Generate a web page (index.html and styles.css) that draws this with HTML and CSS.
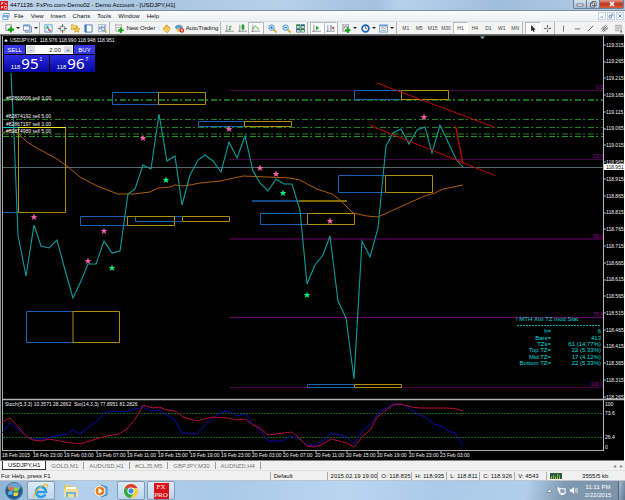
FILE: index.html
```html
<!DOCTYPE html>
<html lang="en">
<head>
<meta charset="utf-8">
<meta name="viewport" content="width=device-width, initial-scale=1">
<title>4471136: FxPro.com-Demo02 - Demo Account - [USDJPY,H1]</title>
<link rel="stylesheet" href="styles.css">
</head>
<body>
<header class="titlebar">
  <svg class="logo" viewBox="0 0 8 9"><rect width="8" height="9" fill="#d8141c"/><path d="M1.500 4V1.500H3.500M1.500 2.500H3M4.500 1.500L7 4M7 1.500L4.500 4M1.500 8V5.500H3V6.500H1.500M4.500 5.500H7V8H4.500Z" stroke="#fff" stroke-width=".6" fill="none"/></svg>
  <h1>4471136: FxPro.com-Demo02 - Demo Account - [USDJPY,H1]</h1>
  <div class="winbtns">
    <button class="min" aria-label="Minimize"><svg viewBox="0 0 10 8"><rect x="2" y="4" width="6" height="2" fill="#fff" stroke="#445" stroke-width=".6"/></svg></button>
    <button class="max" aria-label="Restore"><svg viewBox="0 0 10 8"><path d="M4 1.500h4v4h-4zM2.500 3h4v4h-4z" fill="#fff" stroke="#445" stroke-width=".8"/></svg></button>
    <button class="close" aria-label="Close"><svg viewBox="0 0 10 8"><path d="M3 2l4 4M7 2L3 6" stroke="#fff" stroke-width="1.600"/></svg></button>
  </div>
</header>

<nav class="menubar">
  <svg class="doc" viewBox="0 0 8 8"><path d="M1.500 .500h6v4h-6zM.500 3h5.500v4.500H.500z" fill="#fff" stroke="#5a9bd8"/><path d="M.500 3.500h5.500" stroke="#5a9bd8"/></svg>
  <button>File</button><button>View</button><button>Insert</button><button>Charts</button><button>Tools</button><button>Window</button><button>Help</button>
  <div class="mdi">
    <button aria-label="Minimize chart"><svg viewBox="0 0 8 8"><path d="M2 5.500h3" stroke="#456f9c"/></svg></button>
    <button aria-label="Restore chart"><svg viewBox="0 0 8 8"><path d="M3.500 1.500h3v3M1.500 3.500h3v3h-3z" fill="none" stroke="#456f9c" stroke-width=".9"/></svg></button>
    <button aria-label="Close chart"><svg viewBox="0 0 8 8"><path d="M2 2l4 4M6 2L2 6" stroke="#456f9c" stroke-width="1.100"/></svg></button>
  </div>
</nav>

<div class="toolbar">
  <div class="group">
    <button aria-label="New chart"><svg class="ico" viewBox="0 0 10 10"><path d="M1 1h6v6H1z" fill="#fff" stroke="#789"/><path d="M6.500 3v6.500M3 6.300h7" stroke="#12a512" stroke-width="2.400"/></svg><i class="caret"></i></button>
    <button aria-label="Profiles"><svg class="ico" viewBox="0 0 10 10"><path d="M2.500 3h7v6h-7z" fill="#cfe0f2" stroke="#6a8fb5"/><path d="M.500 1h7v6h-7z" fill="#fff" stroke="#6a8fb5"/><path d="M1 2h6" stroke="#5a9bd8" stroke-width="1.500"/></svg><i class="caret"></i></button>
  </div>
  <div class="group">
    <button aria-label="Market Watch"><svg class="ico" viewBox="0 0 10 10"><path d="M1 1h8v8H1z" fill="#e8f4ff" stroke="#4c9bd6"/><path d="M2 5l2-3 2 3z" fill="#1da51d"/><path d="M4.500 5.500l3 2.500" stroke="#d33" stroke-width="1.500"/></svg></button>
    <button aria-label="Data Window"><svg class="ico" viewBox="0 0 10 10"><circle cx="5" cy="5" r="3" fill="none" stroke="#777"/><path d="M5 0v3.500M5 6.500V10M0 5h3.500M6.500 5H10" stroke="#666"/></svg></button>
    <button aria-label="Navigator"><svg class="ico" viewBox="0 0 10 10"><path d="M0 1h3l1 1h3v4H0z" fill="#f3d36a" stroke="#c39a24" stroke-width=".7"/><path d="M6.500 3l1 2 2.500.200-1.800 1.600.600 2.400-2.300-1.200-2.300 1.200.600-2.400L3 5.200 5.500 5z" fill="#ffc52e" stroke="#b98712" stroke-width=".6"/></svg></button>
    <button aria-label="Terminal"><svg class="ico" viewBox="0 0 10 10"><path d="M1 1h8v8H1z" fill="#fff" stroke="#3d79b8"/><path d="M2 1v8" stroke="#3d79b8" stroke-width="2"/></svg></button>
    <button aria-label="Strategy Tester"><svg class="ico" viewBox="0 0 10 10"><path d="M.500 .500h8v8h-8z" fill="#eef4fb" stroke="#8aa9c8" stroke-width=".8"/><path d="M2 6V3M4 5V2M7 4V2" stroke="#567"/><circle cx="5.500" cy="5.500" r="2" fill="#cfe6ff" stroke="#5587bb" stroke-width=".8"/><path d="M7 7l2.500 2.500" stroke="#c49a2e" stroke-width="1.400"/></svg></button>
  </div>
  <div class="group orders">
    <button><svg class="ico" viewBox="0 0 10 10"><path d="M1 0h6v8H1z" fill="#fff" stroke="#888" stroke-width=".8"/><path d="M2 2h4M2 4h4" stroke="#999" stroke-width=".7"/><path d="M6.500 4v6M3.500 7h6" stroke="#12a512" stroke-width="2.200"/></svg>New Order</button>
    <button aria-label="MetaEditor"><svg class="ico" viewBox="0 0 10 10"><path d="M1 6l4-5 4.500 4L6 9.500z" fill="#f4c648" stroke="#a87a14" stroke-width=".8"/><path d="M1 6l5 2 3.500-3" fill="none" stroke="#fff2b8" stroke-width=".8"/></svg></button>
    <button><svg class="ico" viewBox="0 0 10 10"><path d="M0 3.500Q4-1 8.500 3L6 7H3z" fill="#5d9fd0" stroke="#3f79a8" stroke-width=".6"/><path d="M2 5h4v4H3z" fill="#f0c14a"/><circle cx="7.500" cy="7" r="2.600" fill="#e02a1c"/><path d="M6.600 6h1.800v2H6.600z" fill="#fff"/></svg>AutoTrading</button>
  </div>
  <div class="group">
    <button aria-label="Bar chart"><svg class="ico" viewBox="0 0 10 10"><path d="M2 1v8M0 8h10" stroke="#777" stroke-width=".8"/><path d="M5.500 2v5M5.500 3H7M4 6h1.500" stroke="#17962a"/></svg></button>
    <button aria-label="Candlesticks"><svg class="ico" viewBox="0 0 10 10"><path d="M2 1v8M0 8h10" stroke="#777" stroke-width=".8"/><path d="M5.500 0v7" stroke="#17962a"/><path d="M4.500 1.500h2v4h-2z" fill="#26b83c" stroke="#17962a"/></svg></button>
    <button class="on" aria-label="Line chart"><svg class="ico" viewBox="0 0 10 10"><path d="M2 1v8M0 8h10" stroke="#777" stroke-width=".8"/><path d="M2 6Q4.500 0 6.500 4L9 6" fill="none" stroke="#3da54d"/></svg></button>
  </div>
  <div class="group">
    <button aria-label="Zoom in"><svg class="ico" viewBox="0 0 10 10"><path d="M6 6l3.500 3.500" stroke="#d6a92e" stroke-width="1.800"/><circle cx="4" cy="4" r="3" fill="#d5ecff" stroke="#3e8fcb"/><path d="M2.500 4h3M4 2.500v3" stroke="#1d6cb2"/></svg></button>
    <button aria-label="Zoom out"><svg class="ico" viewBox="0 0 10 10"><path d="M6 6l3.500 3.500" stroke="#d6a92e" stroke-width="1.800"/><circle cx="4" cy="4" r="3" fill="#d5ecff" stroke="#3e8fcb"/><path d="M2.500 4h3" stroke="#1d6cb2"/></svg></button>
    <button aria-label="Tile windows"><svg class="ico" viewBox="0 0 10 10"><path d="M1 1h8v8H1z" fill="#fff"/><path d="M.500 1.500h4M5.500 6h4" stroke="#1ea01e" stroke-width="2"/><path d="M5.500 1.500h4M.500 6h4" stroke="#2a58c8" stroke-width="2"/><path d="M.500 1h4v3.500h-4zM5.500 1h4v3.500h-4zM.500 5.500h4v3.500h-4zM5.500 5.500h4v3.500h-4z" fill="none" stroke="#2d6b50" stroke-width=".8"/></svg></button>
  </div>
  <div class="group">
    <button class="on" aria-label="Auto scroll"><svg class="ico" viewBox="0 0 10 10"><path d="M2 1v8M0 8h10" stroke="#777" stroke-width=".8"/><path d="M4.500 2l3.500 2.500-3.500 2.500z" fill="#22a534"/></svg></button>
    <button class="on" aria-label="Chart shift"><svg class="ico" viewBox="0 0 10 10"><path d="M2 1v8M0 8h10" stroke="#777" stroke-width=".8"/><path d="M5.500 1v6" stroke="#2c6eb4"/><path d="M9 2.500L6 4.500l3 2z" fill="#c44c3a"/></svg></button>
  </div>
  <div class="group">
    <button aria-label="Indicators"><svg class="ico" viewBox="0 0 10 10"><path d="M1 0h6v8H1z" fill="#e9e9e9" stroke="#777" stroke-width=".8"/><path d="M2 5q2-5 4-1" fill="none" stroke="#444" stroke-width=".8"/><path d="M6.500 4v6M3.500 7h6" stroke="#12a512" stroke-width="2.200"/></svg><i class="caret"></i></button>
    <button aria-label="Periods"><svg class="ico" viewBox="0 0 10 10"><circle cx="5" cy="5" r="3.800" fill="#f4faff" stroke="#1b66bd" stroke-width="1.800"/><path d="M5 2.500V5h2" fill="none" stroke="#456" stroke-width=".8"/></svg><i class="caret"></i></button>
    <button aria-label="Templates"><svg class="ico" viewBox="0 0 10 10"><path d="M.500 1h9v8h-9z" fill="#f2f8ff" stroke="#6f9cc8"/><path d="M1 2h8" stroke="#5a9bd8" stroke-width="1.500"/><path d="M2 5l2-1 2 1 2-1" fill="none" stroke="#c44" stroke-width=".7"/><path d="M2 7.500l2-1 2 1 2-1" fill="none" stroke="#2a2" stroke-width=".7"/></svg><i class="caret"></i></button>
  </div>
  <div class="group frames">
    <button>M1</button><button>M5</button><button>M15</button><button>M30</button><button class="on">H1</button><button>H4</button><button>D1</button><button>W1</button><button>MN</button>
  </div>
  <div class="group">
    <button class="on" aria-label="Cursor"><svg class="ico" viewBox="0 0 10 10"><path d="M3.500 1v7l1.600-1.300 1 2.300 1.200-.600-1-2.100H8.500z" fill="#222"/></svg></button>
    <button aria-label="Crosshair"><svg class="ico" viewBox="0 0 10 10"><path d="M5 1v3M5 6v3M1 5h3M6 5h3" stroke="#555"/></svg></button>
  </div>
  <div class="group">
    <button aria-label="Vertical line"><svg class="ico" viewBox="0 0 10 10"><path d="M5 2v6.500" stroke="#666"/></svg></button>
    <button aria-label="Horizontal line"><svg class="ico" viewBox="0 0 10 10"><path d="M2 5.500h6" stroke="#666"/></svg></button>
    <button aria-label="Trendline"><svg class="ico" viewBox="0 0 10 10"><path d="M2 8l6-6" stroke="#555"/></svg></button>
    <button aria-label="Equidistant channel"><svg class="ico" viewBox="0 0 10 10"><path d="M1 6l6-5M3 9l6-5M2 8l6-6M3 4l3 4M5 3l3 3" stroke="#555" stroke-width=".8"/></svg></button>
    <button aria-label="Fibonacci retracement"><svg class="ico" viewBox="0 0 10 10"><path d="M1 1.500h8M1 3.500h8M1 5.500h8M1 7.500h5" stroke="#888" stroke-width=".8"/><path d="M8 7v3M7 8h2" stroke="#444" stroke-width=".8"/></svg></button>
  </div>
</div>

<main class="chart">
<svg class="plot" viewBox="0 34 625 427" role="img" aria-label="USDJPY hourly line chart with stochastic oscillator">
  <defs>
    <path id="star" d="M0-3.500L.900-1H3.300L1.400 .400 2.200 2.900 0 1.500-2.200 2.900-1.400 .400-3.300-1H-.900z"/>
  </defs>
  <rect y="34" width="624" height="427" fill="#000"/>
  <g class="frame">
    <path d="M0 34.500H624" stroke="#777"/><path d="M2 35.500H624" stroke="#4b4f4b"/>
    <path d="M.500 35V461" stroke="#8c9090"/><path d="M2.500 36V451" stroke="#a4a8a8"/>
    <path d="M2 399.500H624" stroke="#b2b2b2" stroke-width="1.400"/>
    <path d="M2 450.500H604" stroke="#a8a8a8"/><path d="M0 460.500H624" stroke="#858585"/>
    <path d="M603.500 36V451" stroke="#b8b8b8"/>
  </g>
  <path d="M480 36.500h5l-2.500 2.500z" fill="#8fa9c0"/>

  <g class="fib">
    <path d="M229 90.500H603M229 159.500H603"/><path d="M229 239H603" stroke-width="1.500"/><path d="M229 317.500H603" stroke="#690069"/><path d="M229 387.500H603"/>
    <text x="603" y="89">0.0</text><text x="603" y="158">23.6</text><text x="603" y="238">50.0</text><text x="603" y="316">76.4</text><text x="603" y="386">100.0</text>
  </g>
  <g class="orders-lines">
    <path d="M3 100H603" stroke="#229822" stroke-width="1.700"/><path d="M3 119.500H603"/><path d="M3 127.500H603"/><path d="M3 134H603" stroke="#0f5a0f" stroke-width="1.600"/><path d="M3 136.500H603" stroke="#229822"/>
  </g>
  <path d="M3 167.500H603" stroke="#506b70"/>

  <g class="zone blue">
    <path d="M159 92.500H112.500V104.500H159"/><path d="M245 121.500H198.500V126.500H245"/><path d="M401 90.500H354.500V99.500H401"/>
    <path d="M3 127.500H18" stroke="#0cc"/><path d="M3 212.500H18"/><path d="M127 216.500H80.500V225.500H127"/><path d="M182 216.500H135.500V221.500H182"/>
    <path d="M385 175.500H338.500V192.500H385"/><path d="M252 201H299" stroke-width="1.600"/><path d="M307 213.500H260.500V224.500H307"/>
    <path d="M73 311.500H26.500V342.500H73"/><path d="M354 384.500H307.500V387.500H354"/>
  </g>
  <g class="zone gold">
    <path d="M158.500 92.500H205.500V104.500H158.500z"/><path d="M244.500 121.500H291.500V126.500H244.500z"/><path d="M401.500 90.500H448.500V99.500H401.500z"/>
    <path d="M18.500 127.500H65.500V212.500H18.500z"/><path d="M18 127.500H66" stroke="#f0e818"/><path d="M127.500 216.500H174.500V225.500H127.500z"/><path d="M182.500 216.500H229.500V221.500H182.500z"/>
    <path d="M385.500 175.500H432.500V192.500H385.500z"/><path d="M299 201H347" stroke-width="1.600"/><path d="M307.500 213.500H354.500V224.500H307.500z"/>
    <path d="M73 311.500H119.500V342.500H73z"/><path d="M354.500 384.500H401.500V387.500H354.500z"/>
  </g>

  <polyline class="ma" points="2,133 10,130 18,133 27,142 37,148 57,159 67,166 80,177 97,186 118,194 133,194 150,192 158,188 170,187 175,185 183,186 190,185 200,183 220,181 243,176 267,177 290,178 300,180 307,184 317,189 332,194 340,200 353,213 367,216 378,217 400,207 420,198 425,196 435,193 443,189 453,187 463,185"/>
  <polyline class="price" points="11,73 14,135 18,235 26,276 34,225 41,246 49,248 57,240 65,270 73,298 81,281 88,264 96,264 104,241 112,253 120,251 128,194 135,189 143,165 151,169 159,114 167,161 175,156 182,205 190,175 198,160 205,155 213,161 221,172 229,142 237,158 245,136 253,171 260,183 268,191 276,179 284,184 292,184 300,210 307,284 315,265 323,255 330,236 338,301 346,318 354,379 362,241 370,257 378,228 386,146 393,133 401,129 409,144 417,130 425,127 432,153 440,125 448,142 456,159 463,167"/>
  <g class="trend"><path d="M377 83L495 127.500M370 125.500L495 175.500"/><path d="M455.500 126L463 164" stroke-width="1.300"/></g>

  <g fill="#ff5fae">
    <use href="#star" x="143" y="138"/><use href="#star" x="229" y="129"/><use href="#star" x="424" y="117"/><use href="#star" x="34" y="217"/><use href="#star" x="104" y="231"/><use href="#star" x="88" y="261"/><use href="#star" x="260" y="168"/><use href="#star" x="276" y="174"/><use href="#star" x="330" y="221"/>
  </g>
  <g fill="#00f080">
    <use href="#star" x="166" y="180"/><use href="#star" x="283" y="193"/><use href="#star" x="112" y="268"/><use href="#star" x="307" y="295"/>
  </g>

  <path d="M4 41.500h4l-2-2.500z" fill="#fff"/>
  <g class="label">
    <text x="10" y="42">USDJPY,H1&#160; 118.976 118.990 118.948 118.951</text>
    <text x="6" y="100">#82868006 sell 3.00</text><text x="6" y="118">#82874192 sell 5.00</text><text x="6" y="126">#82867197 sell 3.00</text><text x="6" y="133">#82874989 sell 5.00</text>
    <text x="5" y="406">Stoch(5,3,3) 10.3571 28.2662&#160; Sto(14,3,3) 77.8951 81.2826</text>
  </g>

  <g class="stat">
    <text x="516" y="321">! MTH Xixi TZ mod Stat</text>
    <path d="M517 325.500H601" stroke="#00a8a8" stroke-dasharray="2 1"/>
    <g class="right">
      <text x="551" y="333">h=</text><text x="601" y="333">6</text>
      <text x="551" y="340">Bars=</text><text x="601" y="340">413</text>
      <text x="551" y="346">TZs=</text><text x="601" y="346">61 (14.77%)</text>
      <text x="551" y="352">Top TZ=</text><text x="601" y="352">22 (5.33%)</text>
      <text x="551" y="359">Mid TZ=</text><text x="601" y="359">17 (4.12%)</text>
      <text x="551" y="365">Bottom TZ=</text><text x="601" y="365">22 (5.33%)</text>
    </g>
  </g>

  <path class="levels" d="M3 413.500H603M3 437.500H603"/>
  <polyline class="slow" points="2,433 10,423 18,429 27,437 33,439 43,439 50,437 67,434 73,430 80,434 90,426 97,421 104,413 112,411 124,412 136,409 143,407 151,411 159,410 167,415 175,420 182,433 197,434 207,423 217,415 222,412 229,411 237,416 246,414 252,424 260,430 268,441 282,441 291,436 299,439 307,445 315,445 323,441 331,433 347,437 354,444 362,431 371,424 378,413 393,404 402,404 418,414 425,417 434,424 443,427 448,431 455,433 463,445"/>
  <polyline class="fast" points="2,422 10,418 18,427 27,437 33,440 41,441 49,439 65,442 80,444 106,436 119,434 127,429 136,418 143,405 152,408 159,407 167,410 175,411 183,417 197,421 212,417 227,418 237,420 245,419 253,425 260,428 268,435 292,432 299,438 307,446 315,447 323,444 331,439 347,443 354,447 362,437 371,429 377,417 393,405 400,404 412,407 420,408 447,408 457,409 463,411"/>

  <path class="ticks" d="M604 45h2M604 62h2M604 78h2M604 95h2M604 112h2M604 129h2M604 145h2M604 162h2M604 179h2M604 196h2M604 213h2M604 229h2M604 246h2M604 263h2M604 280h2M604 296h2M604 313h2M604 330h2M604 347h2M604 363h2M604 380h2M604 397h2"/>
  <g class="label axis">
    <text x="606" y="47">119.315</text><text x="606" y="63">119.265</text><text x="606" y="80">119.215</text><text x="606" y="97">119.165</text><text x="606" y="114">119.115</text><text x="606" y="130">119.065</text><text x="606" y="147">119.015</text><text x="606" y="164">118.965</text><text x="606" y="181">118.915</text><text x="606" y="198">118.865</text><text x="606" y="214">118.815</text><text x="606" y="231">118.765</text><text x="606" y="248">118.715</text><text x="606" y="265">118.665</text><text x="606" y="281">118.615</text><text x="606" y="298">118.565</text><text x="606" y="315">118.515</text><text x="606" y="332">118.465</text><text x="606" y="348">118.415</text><text x="606" y="365">118.365</text><text x="606" y="382">118.315</text><text x="606" y="399">118.265</text>
    <text x="605" y="406">100</text><text x="605" y="415">73.6</text><text x="605" y="439">26.4</text><text x="605" y="449">0</text>
    <rect x="604" y="164" width="20" height="6" fill="#fff"/><text x="606" y="169" class="now">118.951</text>
  </g>
  <path class="ticks" d="M34 451v2M65 451v2M97 451v2M128 451v2M159 451v2M190 451v2M222 451v2M253 451v2M284 451v2M316 451v2M347 451v2M378 451v2M410 451v2M441 451v2"/>
  <g class="label">
    <text x="2" y="457">18 Feb 2015</text><text x="33" y="457">18 Feb 23:00</text><text x="64" y="457">19 Feb 03:00</text><text x="96" y="457">19 Feb 07:00</text><text x="127" y="457">19 Feb 11:00</text><text x="158" y="457">19 Feb 15:00</text><text x="190" y="457">19 Feb 19:00</text><text x="221" y="457">19 Feb 23:00</text><text x="252" y="457">20 Feb 03:00</text><text x="283" y="457">20 Feb 07:00</text><text x="315" y="457">20 Feb 11:00</text><text x="346" y="457">20 Feb 15:00</text><text x="377" y="457">20 Feb 19:00</text><text x="409" y="457">20 Feb 23:00</text><text x="440" y="457">23 Feb 03:00</text>
  </g>
</svg>
<form class="trade">
  <div class="trade-top">
    <button type="button">SELL</button>
    <div class="lots"><button type="button" aria-label="Less">-</button><input aria-label="Volume" value="2.00"><button type="button" aria-label="More">+</button></div>
    <button type="button">BUY</button>
  </div>
  <div class="quotes">
    <button type="button" aria-label="Sell at 118.951"><span>118</span><b>95</b><sup>1</sup></button>
    <button type="button" aria-label="Buy at 118.967"><span>118</span><b>96</b><sup>7</sup></button>
  </div>
</form>
</main>

<nav class="tabs">
  <a href="#" class="active">USDJPY,H1</a><a href="#">GOLD,M1</a><a href="#">AUDUSD,H1</a><a href="#">#CLJ5,M5</a><a href="#">GBPJPY,M30</a><a href="#">AUDNZD,H4</a>
  <div class="scroll"><button aria-label="Scroll left">◂</button><button aria-label="Scroll right">▸</button></div>
</nav>

<div class="status">
  <span>For Help, press F1</span><span>Default</span><span>2015.02.19 19:00</span><span>O: 118.835</span><span>H: 118.935</span><span>L: 118.811</span><span>C: 118.926</span><span>V: 4543</span>
  <span class="traffic"><svg viewBox="0 0 12 6"><rect width="12" height="6" fill="#2c5c3a"/><path d="M1.500 6V3M3.500 6V2M5.500 6V3M7.500 6V1M9.500 6V2" stroke="#9cc63c"/><path d="M0 3h12" stroke="#244c7c" stroke-width=".6"/></svg>3555/5 kb</span>
</div>

<footer class="taskbar">
  <button class="start" aria-label="Start"><svg viewBox="0 0 18 18"><circle cx="9" cy="9" r="8.500" fill="#1f5c91" stroke="#4f7899"/><ellipse cx="9" cy="5" rx="6.500" ry="4" fill="#6fa5cd"/><path d="M4 5.500q2.500-1.500 4.500-.300L8 8.700q-2-1-4.300 0z" fill="#f06a2a"/><path d="M9.300 5.500q2 1.200 4.700 0L13.500 9q-2.200 1.200-4.600 0z" fill="#8fce3a"/><path d="M3.500 9.600q2.200-1.200 4.300 0L7.200 13q-2-1.200-4.200 0z" fill="#4fb4f0"/><path d="M8.800 9.900q2.200 1.200 4.600 0l-.700 3.500q-2.200 1.200-4.500 0z" fill="#ffcf38"/></svg></button>
  <button class="run" aria-label="Internet Explorer"><svg viewBox="0 0 16 16"><path d="M3 9H13A5 5 0 1 0 12.300 11.500" fill="none" stroke="#2a9de4" stroke-width="2.600"/><path d="M1.500 14.500C-1 12 6 3.500 12 1.500c3-.800 3 1 2 3" fill="none" stroke="#f2b92e" stroke-width="1.300"/></svg></button>
  <button aria-label="Explorer"><svg viewBox="0 0 16 16"><path d="M1 2h5l1 1.500h7V13H1z" fill="#eac662"/><path d="M3 4h10v4H3z" fill="#fff"/><path d="M1 6h14v8H1z" fill="#f8df94"/><path d="M4 14v-4h8v4" fill="none" stroke="#6eb4dc" stroke-width="2"/></svg></button>
  <button aria-label="Media Player"><svg viewBox="0 0 16 16"><path d="M8 2l6 2v8l-6 2z" fill="#6fb1e4" stroke="#4686c0"/><circle cx="7" cy="8" r="5" fill="#ee7a1e" stroke="#fff"/><path d="M5.500 5l4 3-4 3z" fill="#fff"/></svg></button>
  <button class="run" aria-label="Chrome"><svg viewBox="0 0 16 16"><circle cx="8" cy="8" r="7" fill="#f7cf2c"/><path d="M8 8L1.900 4.500A7 7 0 0 1 14.100 4.500H8z" fill="#e03c2c"/><path d="M8 8L1.900 4.500A7 7 0 0 0 7.500 15L11 9.500z" fill="#35a648"/><path d="M8 4.500H14.100" stroke="#e03c2c"/><circle cx="8" cy="8" r="3.200" fill="#4688e8" stroke="#fff"/></svg></button>
  <button class="run fx" aria-label="FxPro"><span>FX</span><span>PRO</span></button>
  <div class="tray">
    <svg viewBox="0 0 10 10"><path d="M2 7l3-3.500L8 7z" fill="#fff" stroke="#5b7690" stroke-width=".7"/></svg>
    <svg viewBox="0 0 10 10"><path d="M3 3h6v5H3zM4 9.500h4M1.500 1v5M.500 3h2.500" fill="none" stroke="#fff" stroke-width="1.200"/></svg>
    <svg viewBox="0 0 10 10"><path d="M1 3.500h2L5.500 1v8L3 6.500H1z" fill="#fff"/><path d="M7 3q1.500 2 0 4M8.500 2q2.200 3 0 6" fill="none" stroke="#fff" stroke-width=".8"/></svg>
    <div class="clock"><span>11:11 PM</span><span>2/22/2015</span></div>
    <button class="desk" aria-label="Show desktop"></button>
  </div>
</footer>
</body>
</html>
```
FILE: styles.css
```css
* { box-sizing: border-box; }

body {
  margin: 0;
  min-height: 100vh;
  display: flex;
  flex-direction: column;
  overflow-x: hidden;
  background: #f0f0f0;
  color: #111;
  font: 6px/8px "Liberation Sans", Arial, sans-serif;
}

button, input {
  margin: 0;
  padding: 0;
  border: 0;
  background: none;
  color: inherit;
  font: inherit;
}

svg { display: block; }

/* title bar */
.titlebar {
  display: flex;
  align-items: center;
  gap: 2px;
  height: 11px;
  border-bottom: 1px solid #7c8da0;
  background: linear-gradient(100deg, #bfd5ec 0%, #a9c4e0 25%, #b7d0ea 45%, #a3c0de 60%, #b6d1eb 64%, #9fbddc 80%, #b4cde6 100%);
}
.titlebar h1 {
  flex: 1;
  margin: 0;
  font: inherit;
  color: #000;
  white-space: nowrap;
}
.logo { width: 8px; height: 9px; }
.winbtns {
  display: flex;
  align-self: flex-start;
  margin-right: 1px;
  border: 1px solid #6b7f94;
  border-top: 0;
  border-radius: 0 0 2px 2px;
}
.winbtns button {
  display: flex;
  justify-content: center;
  width: 13px;
  height: 8px;
  border-right: 1px solid #6b7f94;
  background: linear-gradient(#d5e2f0, #a5bbd2);
}
.winbtns svg { width: 10px; height: 8px; }
.winbtns .close { width: 23px; border: 0; background: linear-gradient(#e09a88, #c0341c 50%, #d8603c); }

/* menu */
.menubar {
  display: flex;
  align-items: center;
  gap: 7px;
  height: 10px;
  padding-left: 2px;
  background: linear-gradient(#fafbfc, #eceff3);
}
.doc { width: 8px; height: 7px; margin-right: -3px; }
.mdi { display: flex; gap: 1px; margin-left: auto; padding-right: 1px; }
.mdi button { width: 8px; height: 8px; border: 1px solid #c2d4e6; background: #f4f8fc; }
.mdi svg { width: 6px; height: 6px; }

/* toolbar */
.toolbar {
  display: grid;
  grid-template-columns: 37fr 68fr 109fr 41fr 42fr 28fr 57fr 124fr 30fr 68fr;
  column-gap: 2px;
  height: 13px;
  padding-left: 3px;
  border-top: 1px solid #dcdcdc;
  background: #f3f3f3;
}
.group { display: flex; border-right: 1px solid #b4b4b4; }
.group:last-child { border: 0; }
.group button {
  flex: 1;
  min-width: 0;
  display: flex;
  align-items: center;
  justify-content: center;
  gap: 2px;
}
.group .on { border: 1px solid #b8b8b8; border-right-color: #fff; border-bottom-color: #fff; background: #fafafa; }
.ico { flex: none; width: 9px; height: 9px; }
.caret { border: 2px solid transparent; border-top-color: #222; border-bottom: 0; }
.orders button { flex: 46; white-space: nowrap; }
.orders button:nth-child(2) { flex: 14; }
.frames { color: #444; font-size: 5px; }

/* chart */
.chart { position: relative; background: #fff; }
.plot { width: 100%; height: auto; fill: none; }
.plot text { font-family: "Liberation Sans", Arial, sans-serif; font-size: 5px; }
.plot .label text { fill: #f0f0f0; }
.plot .axis .now { fill: #111; }
.fib { stroke: #4a004a; }
.fib text { fill: #a000a0; stroke: none; text-anchor: end; }
.orders-lines { stroke: #1c821c; stroke-dasharray: 6 2 2 3; }
.zone.blue { stroke: #1763b4; }
.zone.gold { stroke: #b08d0c; }
.ma { stroke: #b05c08; }
.price { stroke: #0c9c9c; stroke-width: 1.1; }
.trend { stroke: #c00808; }
.plot .stat text { fill: #00dcdc; font-size: 6px; }
.stat .right { text-anchor: end; }
.levels { stroke: #0b680b; stroke-dasharray: 2 1; }
.slow { stroke: #0808b0; }
.fast { stroke: #b80c38; }
.ticks { stroke: #b8b8b8; }

/* one-click trading panel lies over the chart */
.trade {
  position: absolute;
  left: 4px;
  top: 11px;
  width: 91px;
  color: #fff;
}
.trade-top { display: flex; gap: 1px; height: 9px; }
.trade-top > button { width: 21px; background: #3737e4; }
.lots { flex: 1; display: flex; background: #fff; color: #222; }
.lots button { width: 8px; margin: 1px; background: #d9dde3; line-height: 6px; color: #357; }
.lots input { flex: 1; width: 0; text-align: right; padding-right: 2px; }
.quotes { display: flex; gap: 1px; margin-top: 1px; }
.quotes button {
  flex: 1;
  display: flex;
  align-items: flex-end;
  justify-content: center;
  gap: 1px;
  height: 17px;
  padding-bottom: 2px;
  background: linear-gradient(#2a2ae0, #0606a0);
}
.quotes b { font: 15px/13px "Noto Sans", sans-serif; }
.quotes sup { align-self: flex-start; }
.quotes span { line-height: 6px; }

/* chart tabs */
.tabs {
  display: flex;
  height: 10px;
  padding-left: 2px;
  border-bottom: 1px solid #e0e0e0;
  background: #f0f0f0;
}
.tabs a {
  margin: 1px 0;
  padding: 0 5px;
  border-right: 1px solid #999;
  color: #777;
  text-decoration: none;
}
.tabs .active { margin: 0; border: 1px solid #333; border-top: 0; background: #fff; color: #000; }
.scroll { display: flex; gap: 4px; margin-left: auto; padding-right: 2px; color: #888; }

/* status bar */
.status {
  display: grid;
  grid-template-columns: 270fr 57fr 50fr 34fr 35fr 33fr 35fr 32fr 79fr;
  height: 10px;
  border-bottom: 1px solid #b9c4ce;
  white-space: nowrap;
}
.status span { margin: 1px 0; padding-left: 3px; border-left: 1px solid #aaa; }
.status span:first-child { padding-left: 1px; border: 0; }
.status .traffic { display: flex; align-items: center; gap: 20px; }
.traffic svg { width: 12px; height: 6px; }

/* taskbar */
.taskbar {
  flex: 1;
  display: flex;
  align-items: stretch;
  gap: 2px;
  min-height: 19px;
  padding-left: 3px;
  background: linear-gradient(100deg, #8fb4d6 0%, #b3d0ec 12%, #a9c9e8 35%, #b9d5f0 55%, #abcae9 70%, #b1cfeb 84%, #8199b0 90%, #7b92a8 100%);
}
.taskbar > button { display: flex; align-items: center; justify-content: center; width: 28px; }
.taskbar > button svg { width: 16px; height: 16px; }
.taskbar .start { width: 22px; }
.taskbar .start svg { width: 18px; height: 18px; }
.taskbar .run { border: 1px solid #7e9cb8; border-radius: 2px; background: linear-gradient(#dfecf8, #bcd5ec); }
.taskbar .fx { flex-direction: column; }
.fx span {
  width: 15px;
  background: #dc1018;
  color: #fff;
  font: 7px/8px "Liberation Serif", serif;
}
.tray { display: flex; align-items: center; gap: 3px; margin-left: auto; color: #fff; }
.tray svg { width: 9px; height: 9px; }
.clock { display: flex; flex-direction: column; width: 34px; text-align: center; }
.desk { align-self: stretch; width: 7px; border-left: 1px solid #567; background: linear-gradient(100deg, #a9bccd, #5f7890); }
```
